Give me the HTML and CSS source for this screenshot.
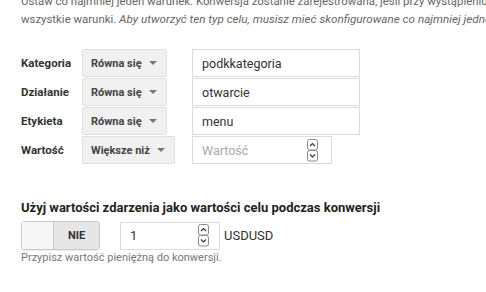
FILE: index.html
```html
<!DOCTYPE html>
<html lang="pl">
<head>
<meta charset="utf-8">
<link rel="stylesheet" href="styles.css">
</head>
<body>
<div class="page">
  <p class="intro">Ustaw co najmniej jeden warunek. Konwersja zostanie zarejestrowana, jeśli przy wystąpieniu zdarzenia spełnione będą<br>wszystkie warunki. <em>Aby utworzyć ten typ celu, musisz mieć skonfigurowane co najmniej jedno zdarzenie.</em></p>

  <div class="conditions">
    <div class="label">Kategoria</div>
    <div class="cell"><button class="drop">Równa się <span class="caret"></span></button></div>
    <div class="field wide">podkkategoria</div>

    <div class="label">Działanie</div>
    <div class="cell"><button class="drop">Równa się <span class="caret"></span></button></div>
    <div class="field wide">otwarcie</div>

    <div class="label">Etykieta</div>
    <div class="cell"><button class="drop">Równa się <span class="caret"></span></button></div>
    <div class="field wide">menu</div>

    <div class="label">Wartość</div>
    <div class="cell"><button class="drop">Większe niż <span class="caret"></span></button></div>
    <div class="field narrow placeholder"><span>Wartość</span>
      <svg class="spin" width="11" height="23" viewBox="0 0 11 23">
        <rect x="0.5" y="0.5" width="10" height="10.5" rx="2" fill="#fff" stroke="#8a8a8a"/>
        <rect x="0.5" y="11.5" width="10" height="10.5" rx="2" fill="#fff" stroke="#8a8a8a"/>
        <path d="M3 7 L5.5 4.5 L8 7" fill="none" stroke="#333" stroke-width="1.1"/>
        <path d="M3 15.5 L5.5 18 L8 15.5" fill="none" stroke="#333" stroke-width="1.1"/>
      </svg>
    </div>
  </div>

  <h3 class="heading">Użyj wartości zdarzenia jako wartości celu podczas konwersji</h3>
  <div class="valuerow">
    <div class="toggle"><span class="off"></span><span class="on">NIE</span></div>
    <div class="field number"><span>1</span>
      <svg class="spin" width="11" height="23" viewBox="0 0 11 23">
        <rect x="0.5" y="0.5" width="10" height="10.5" rx="2" fill="#fff" stroke="#8a8a8a"/>
        <rect x="0.5" y="11.5" width="10" height="10.5" rx="2" fill="#fff" stroke="#8a8a8a"/>
        <path d="M3 7 L5.5 4.5 L8 7" fill="none" stroke="#333" stroke-width="1.1"/>
        <path d="M3 15.5 L5.5 18 L8 15.5" fill="none" stroke="#333" stroke-width="1.1"/>
      </svg>
    </div>
    <span class="currency">USDUSD</span>
  </div>
  <p class="help">Przypisz wartość pieniężną do konwersji.</p>
</div>
</body>
</html>
```

FILE: styles.css
```css
html, body {
  margin: 0;
  padding: 0;
  background: #fff;
  overflow: hidden;
}
body {
  font-family: Roboto, "Liberation Sans", sans-serif;
  color: #333;
}
.page {
  width: 640px;
  padding-left: 21px;
}
.intro {
  margin: -8px 0 0;
  font-size: 11.4px;
  line-height: 18px;
  color: #666;
  white-space: nowrap;
}
.intro em {
  font-style: italic;
  font-size: 11.7px;
}
.conditions {
  margin-top: 21px;
  display: grid;
  grid-template-columns: 61px 110px auto;
  grid-auto-rows: 28px;
  row-gap: 1px;
  align-items: center;
  justify-items: start;
}
.label {
  font-size: 11.5px;
  font-weight: 700;
  color: #333;
}
.cell {
  height: 28px;
}
.drop {
  height: 28px;
  box-sizing: border-box;
  display: flex;
  align-items: center;
  padding: 0 9px 0 8px;
  background: #f1f1f1;
  border: 1px solid #e0e0e0;
  border-radius: 2px;
  font-family: Roboto, "Liberation Sans", sans-serif;
  font-size: 11px;
  font-weight: 700;
  color: #444;
}
.caret {
  margin-left: 7px;
  width: 0;
  height: 0;
  border-left: 4px solid transparent;
  border-right: 4px solid transparent;
  border-top: 4px solid #777;
}
.field {
  height: 28px;
  box-sizing: border-box;
  border: 1px solid #dcdcdc;
  display: flex;
  align-items: center;
  padding: 0 9px;
  font-size: 12.5px;
  color: #333;
  background: #fff;
}
.field.wide {
  width: 168px;
}
.field.narrow {
  width: 140px;
  justify-content: space-between;
  padding-right: 13px;
}
.placeholder span {
  color: #aaa;
}
.spin {
  display: block;
}
.heading {
  margin: 36px 0 0;
  font-size: 13px;
  font-weight: 700;
  color: #222;
  line-height: 16px;
}
.valuerow {
  margin-top: 5px;
  display: flex;
  align-items: center;
}
.toggle {
  width: 79px;
  height: 29px;
  box-sizing: border-box;
  display: flex;
  border: 1px solid #c8c8c8;
  border-radius: 3px;
  overflow: hidden;
  box-shadow: 0 1px 1px rgba(0,0,0,0.08);
}
.toggle .off {
  width: 31px;
  background: #f6f6f6;
  border-right: 1px solid #c8c8c8;
}
.toggle .on {
  flex: 1;
  background: #e6e6e6;
  display: flex;
  align-items: center;
  justify-content: center;
  font-size: 11px;
  font-weight: 700;
  color: #333;
}
.field.number {
  margin-left: 20px;
  width: 100px;
  height: 28px;
  justify-content: space-between;
  padding-right: 10px;
  font-size: 13px;
}
.currency {
  margin-left: 4px;
  font-size: 13px;
  color: #333;
}
.help {
  margin: 1px 0 0;
  font-size: 11px;
  line-height: 14px;
  color: #777;
}
```
